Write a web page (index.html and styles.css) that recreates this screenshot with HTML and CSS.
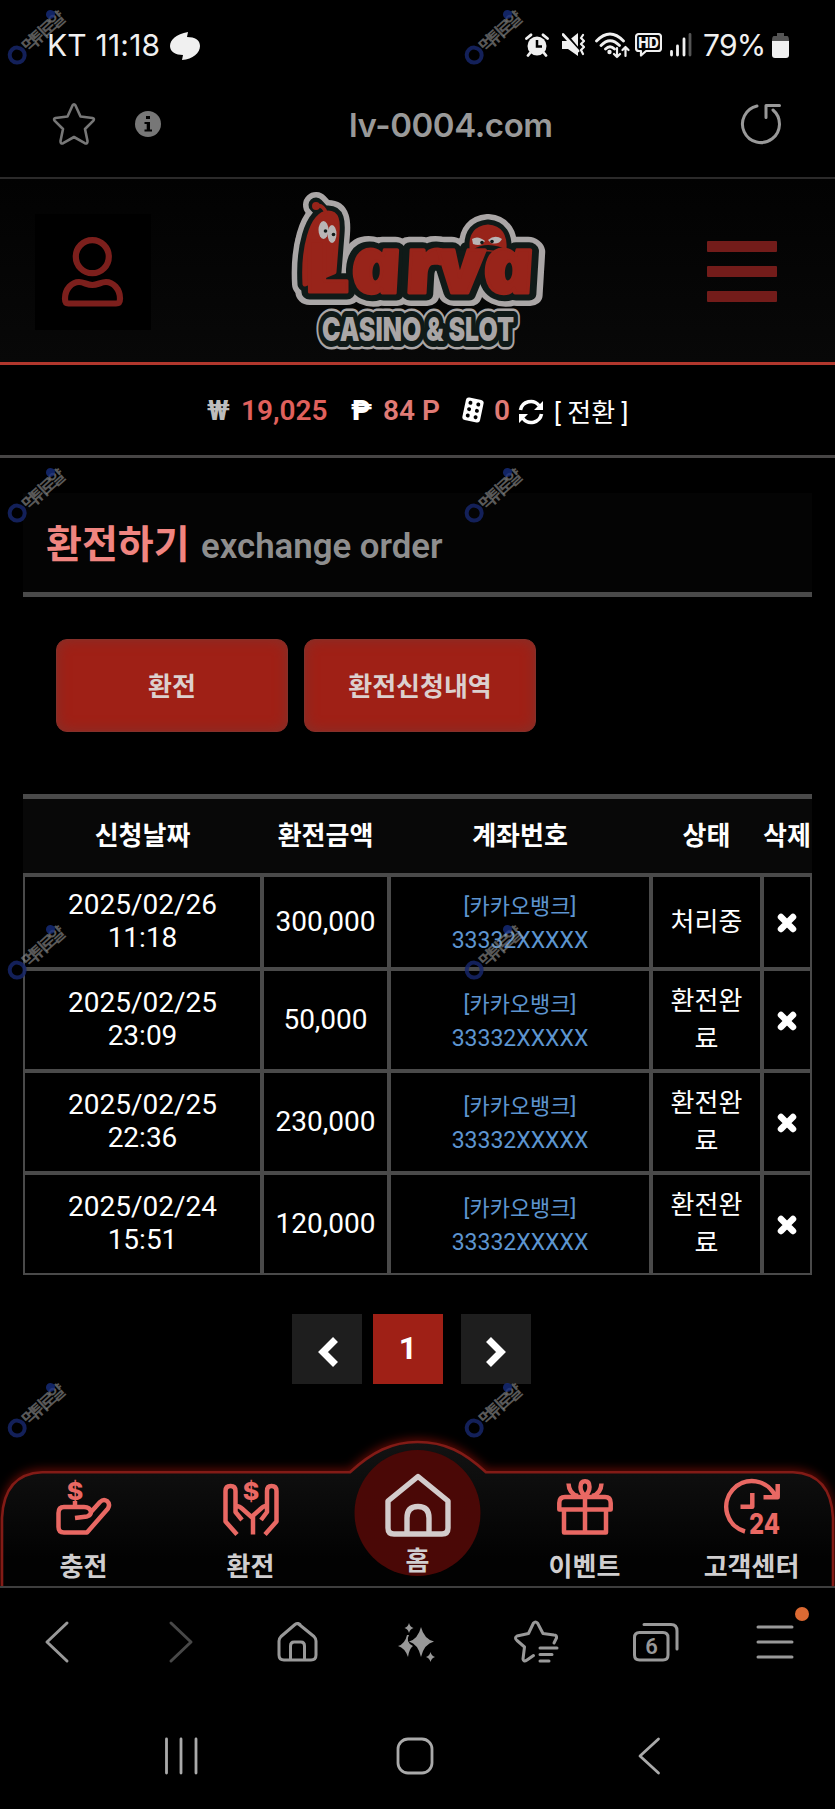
FILE: index.html
```html
<!DOCTYPE html>
<html lang="ko">
<head>
    <meta charset="UTF-8">
    <meta name="viewport" content="width=device-width, initial-scale=1.0">
    <title>환전하기 - Larva Casino &amp; Slot</title>
    <link rel="stylesheet" href="styles.css">
</head>
<body>

    <!-- Status Bar -->
    <div class="status-bar">
        <span class="carrier">KT 11:18</span>
        <svg class="talk" width="30" height="28" viewBox="0 0 30 28"><path d="M18 0 C6 2 0 8 0 14 C0 20 6 23 13 23 L12 28 C23 27 30 21 30 14 C30 8 25 5 17 5 Z"/></svg>
        <span class="status-icons">
            <svg class="alarm" width="24" height="24" viewBox="0 0 24 24"><circle cx="12" cy="13" r="9.5"/><path class="line" d="M1.5 5.5 L6 1.8 M22.5 5.5 L18 1.8 M5 20 L3 22.5 M19 20 L21 22.5"/><path class="cut" d="M12 7 V13.5 H17"/></svg>
            <svg class="mute" width="23" height="24" viewBox="0 0 23 24"><path d="M0 8 H6 L16 0 V23 L6 16 H0 Z"/><path class="cut" d="M3 0 L18 18"/><path class="line" d="M1 1.5 L16 18"/><path class="line thin" d="M21 2 L19 5 L22 8 L19 11 L22 14 L19 17 L21 21"/></svg>
            <svg class="wifi" width="35" height="27" viewBox="0 0 35 27"><path class="line" d="M1.5 9 Q15 -5 28.5 9 M6 13.5 Q15 4 24.5 13.5 M10.5 17 Q15 12.5 19.5 17"/><circle cx="14.5" cy="20" r="2.2"/><path class="line thin" d="M22 16 V25 M19 22 L22 25 L25 22 M30.5 24 V15 M27.5 18 L30.5 15 L33.5 18"/></svg>
            <svg class="volte" width="27" height="24" viewBox="0 0 27 24"><path class="line thin" d="M4 1 H23 Q26 1 26 4 V15 Q26 18 23 18 H11 L6 22.5 V18 H4 Q1 18 1 15 V4 Q1 1 4 1 Z"/><text x="13.5" y="14.5" class="hd">HD</text></svg>
            <svg width="22" height="24" viewBox="0 0 22 24"><path class="line" d="M1.5 18.5 V22 M7.5 13 V22 M14 6 V22"/><path class="line off" d="M20 1.5 V22"/></svg>
        </span>
        <span class="percent">79%</span>
        <svg width="17" height="25" viewBox="0 0 17 25"><path class="cap" d="M5 0 H12 V3 H15 Q17 3 17 8 H0 Q0 3 2 3 H5 Z"/><path d="M0 8 H17 V22 Q17 25 14 25 H3 Q0 25 0 22 Z"/></svg>
    </div>

    <!-- Address Bar -->
    <div class="address-bar">
        <svg class="star" width="44" height="44" viewBox="0 0 44 44"><path d="M20.5 3.5 Q22 1 23.5 3.5 L28.5 14.5 L40.5 16 Q43 16.8 41.2 18.8 L33 27 L35.5 39 Q35.6 42.3 32.8 41.2 L22 35 L11.2 41.2 Q8.4 42.3 8.5 39 L11 27 L2.8 18.8 Q1 16.8 3.5 16 L15.5 14.5 Z"/></svg>
        <span class="info"><svg width="26" height="26" viewBox="0 0 26 26"><circle cx="13" cy="13" r="13"/><path d="M11 5 H15 V8 H11 Z M9.5 11 H15 V18.5 H17 V20.5 H9.5 V18.5 H11.7 V13 H9.5 Z"/></svg></span>
        <span class="url">lv-0004.com</span>
        <svg class="reload" width="42" height="42" viewBox="0 0 42 42"><path d="M17 3 A18.5 18.5 0 1 0 33 7 M39.5 2.5 H26 V14.5"/></svg>
    </div>

    <!-- Site Header -->
    <header class="header">
        <div class="user-box">
            <svg width="116" height="116" viewBox="0 0 116 116"><circle cx="57.3" cy="42.7" r="16.5"/><path d="M33.5 89.5 C31 89.5 30 88 30 84.5 C30 75 37 68 44 68 C49 68 52 71 57.3 71 C62.5 71 66 68 71 68 C78 68 85 75 85 84.5 C85 88 84 89.5 81 89.5 Z"/></svg>
        </div>
        <svg class="logo" width="290" height="180" viewBox="0 0 290 180">
            <defs>
                <g id="word">
                    <text x="36" y="112" font-size="70" textLength="43" lengthAdjust="spacingAndGlyphs">L</text>
                    <g class="round" transform="skewX(10)">
                        <text x="64" y="113" font-size="78" textLength="52" lengthAdjust="spacingAndGlyphs">a</text>
                        <text x="118" y="113" font-size="78" textLength="37" lengthAdjust="spacingAndGlyphs">r</text>
                        <text x="152" y="113" font-size="78" textLength="46" lengthAdjust="spacingAndGlyphs">v</text>
                        <text x="196" y="113" font-size="78" textLength="53" lengthAdjust="spacingAndGlyphs">a</text>
                    </g>
                </g>
                <g id="heads">
                    <path d="M35 104 C33 70 41 34 58 33 C67 33 68 41 67 54 L64 92 Z"/>
                    <path d="M202 68 C201 53 208 48 218 47 C230 48 235 56 234 70 Z"/>
                </g>
                <text id="sub" x="52" y="161" font-size="33" textLength="192" lengthAdjust="spacingAndGlyphs">CASINO &amp; SLOT</text>
            </defs>
            <g class="rim"><use href="#word"/><use href="#heads"/><path d="M46 25 L58 38"/></g>
            <use class="sub-rim" href="#sub"/>
            <g class="edge"><use href="#word"/><use href="#heads"/><path d="M46 25 L58 38"/></g>
            <use class="sub-edge" href="#sub"/>
            <use class="face" href="#heads"/>
            <!-- dark gap between the small head and the letters -->
            <path class="gap" d="M174 72 Q190 74 204 72 Q218 62 240 74"/>
            <g class="face slim"><use href="#word"/><circle cx="46" cy="26" r="2.5"/></g>
            <path class="feeler" d="M46 26 Q53 24 56 33"/>
            <use class="sub-face" href="#sub"/>
            <g class="eyes"><ellipse cx="53.5" cy="50" rx="5" ry="9"/><ellipse cx="62" cy="54" rx="4.5" ry="9"/><path d="M202 59 Q208 55 215 61 Q211 67 203 64 Z M218 60 Q225 54 232 59 Q229 65 221 63 Z"/></g>
            <g class="pupils"><circle cx="55.5" cy="51" r="1.8"/><circle cx="63.5" cy="54.5" r="1.8"/><circle cx="212" cy="62.5" r="1.8"/><circle cx="222" cy="61.5" r="1.8"/></g>
        </svg>
        <div class="menu"><i></i><i></i><i></i></div>
    </header>

    <!-- Wallet -->
    <div class="wallet">
        <span class="won">₩</span>
        <b class="money">19,025</b>
        <span class="peso">₱</span>
        <b class="point">84 P</b>
        <svg class="dice" width="26" height="26" viewBox="0 0 26 26"><g transform="rotate(12 13 13)"><rect x="4" y="1.5" width="18" height="23" rx="3"/><g class="dots"><circle cx="9" cy="6.5" r="2"/><circle cx="17" cy="6.5" r="2"/><circle cx="9" cy="13" r="2"/><circle cx="17" cy="13" r="2"/><circle cx="9" cy="19.5" r="2"/><circle cx="17" cy="19.5" r="2"/></g></g></svg>
        <b class="point">0</b>
        <svg class="swap" width="26" height="26" viewBox="0 0 26 26"><path class="arc" d="M2.5 11 A10.5 10.5 0 0 1 21 6.5 M23.5 15 A10.5 10.5 0 0 1 5 19.5"/><path d="M25 2 V11 H16 Z M1 24 V15 H10 Z"/></svg>
        <span class="convert">[ 전환 ]</span>
    </div>

    <!-- Exchange Section -->
    <main class="content">
        <div class="title">
            <h1>환전하기</h1>
            <span>exchange order</span>
        </div>

        <div class="tabs">
            <button>환전</button>
            <button>환전신청내역</button>
        </div>

        <table class="list">
            <colgroup>
                <col class="c-date"><col class="c-amount"><col class="c-account"><col class="c-state"><col class="c-del">
            </colgroup>
            <tr><th>신청날짜</th><th>환전금액</th><th>계좌번호</th><th>상태</th><th>삭제</th></tr>
            <tr class="first">
                <td>2025/02/26<br>11:18</td>
                <td>300,000</td>
                <td class="account"><small>[카카오뱅크]</small><br>33332XXXXX</td>
                <td class="state">처리중</td>
                <td><svg class="x" width="20" height="20" viewBox="0 0 20 20"><path d="M4 4 L16 16 M16 4 L4 16"/></svg></td>
            </tr>
            <tr>
                <td>2025/02/25<br>23:09</td>
                <td>50,000</td>
                <td class="account"><small>[카카오뱅크]</small><br>33332XXXXX</td>
                <td class="state">환전완<br>료</td>
                <td><svg class="x" width="20" height="20" viewBox="0 0 20 20"><path d="M4 4 L16 16 M16 4 L4 16"/></svg></td>
            </tr>
            <tr>
                <td>2025/02/25<br>22:36</td>
                <td>230,000</td>
                <td class="account"><small>[카카오뱅크]</small><br>33332XXXXX</td>
                <td class="state">환전완<br>료</td>
                <td><svg class="x" width="20" height="20" viewBox="0 0 20 20"><path d="M4 4 L16 16 M16 4 L4 16"/></svg></td>
            </tr>
            <tr>
                <td>2025/02/24<br>15:51</td>
                <td>120,000</td>
                <td class="account"><small>[카카오뱅크]</small><br>33332XXXXX</td>
                <td class="state">환전완<br>료</td>
                <td><svg class="x" width="20" height="20" viewBox="0 0 20 20"><path d="M4 4 L16 16 M16 4 L4 16"/></svg></td>
            </tr>
        </table>

        <div class="paging">
            <a class="prev"><svg width="20" height="30" viewBox="0 0 20 30"><path d="M17.5 2.5 L5 15 L17.5 27.5"/></svg></a>
            <a class="on">1</a>
            <a class="next"><svg width="20" height="30" viewBox="0 0 20 30"><path d="M2.5 2.5 L15 15 L2.5 27.5"/></svg></a>
        </div>
    </main>

    <!-- Bottom Menu -->
    <nav class="bottom">
        <svg class="bottom-bg" width="835" height="156" viewBox="0 0 835 156">
            <defs>
                <linearGradient id="navFill" x1="0" y1="0" x2="0" y2="1">
                    <stop offset="0" stop-color="#131313"/>
                    <stop offset="0.8" stop-color="#020202"/>
                </linearGradient>
            </defs>
            <path class="shape" d="M2 158 V88 Q4 44 42 42.3 H350 C372 22 392 12 417.5 12 C445 12 464 22 486 42.3 H793 Q831 44 833 88 V158"/>
            <circle cx="417.5" cy="83" r="63"/>
        </svg>
        <div class="items">
            <a>
                <svg width="56" height="56" viewBox="0 0 56 56"><path d="M19 39 L31 37.5 Q35 36 35 33 Q34 28 28 28 H8 Q2.5 28 2.5 34 V48 Q2.5 53.5 8 53.5 H31 L52 29.5 Q54.5 25 51 22 Q47.5 19.5 44 23 L35 33 M19 22 V28"/><text x="19" y="20.5">$</text></svg>
                <span>충전</span>
            </a>
            <a>
                <svg width="56" height="56" viewBox="0 0 56 56"><path d="M14 55.5 L2.5 42.5 V12 Q2.5 7 7.5 7 Q12.5 7 12.5 12 V33 L19 41 M12.5 27 Q17 27 19.5 30 L28.5 38 L37.5 30 Q40 27 43.5 27 M30 55.5 V37 M42 55.5 L53.5 42.5 V12 Q53.5 7 48.5 7 Q44 7 44 12 V33 L38 41"/><text x="28" y="21">$</text></svg>
                <span>환전</span>
            </a>
            <a class="home">
                <svg width="66" height="64" viewBox="0 0 66 64"><path d="M33 3.5 L3 28 V55 Q3 61 9 61 H57 Q63 61 63 55 V28 Z M22 61 V45 Q22 33.5 33 33.5 Q44 33.5 44 45 V61"/></svg>
                <span>홈</span>
            </a>
            <a>
                <svg width="56" height="56" viewBox="0 0 56 56"><path d="M2.3 30.5 V24 Q2.3 18 8 18 H48 Q53.7 18 53.7 24 V30.5 Z M7 30.5 V53.5 H49 V30.5 M28 18 V53.5 M28 17 Q23.5 13 23.5 8 Q23.5 2.3 28 2.3 Q32.5 2.3 32.5 8 Q32.5 13 28 17 M11.5 4.5 Q12 15 21 17 M44.5 4.5 Q44 15 35 17"/></svg>
                <span>이벤트</span>
            </a>
            <a>
                <svg width="56" height="56" viewBox="0 0 56 56"><path d="M21 52.5 A25.7 25.7 0 1 1 51.5 17.5 M53.7 5 V18.3 H39.5 M28.3 14 V27.8 H16.5"/><text class="n24" x="40.5" y="55" textLength="31" lengthAdjust="spacingAndGlyphs">24</text></svg>
                <span>고객센터</span>
            </a>
        </div>
    </nav>

    <!-- Browser Toolbar -->
    <div class="toolbar">
        <svg width="48" height="48" viewBox="0 0 48 48"><path d="M31 5 L11 24 L31 43"/></svg>
        <svg class="dim" width="48" height="48" viewBox="0 0 48 48"><path d="M16 5 L36 24 L16 43"/></svg>
        <svg width="48" height="48" viewBox="0 0 48 48"><path d="M24 5.5 L40 18.5 Q42 20.5 42 23 V37 Q42 42 37 42 H10 Q5 42 5 37 V23 Q5 20.5 7 18.5 L21 6.5 Q23.5 4.5 26 6.5 M16.5 42 V28 Q16.5 24 20 24 H27 Q30.5 24 30.5 28 V42"/></svg>
        <svg class="solid" width="48" height="48" viewBox="0 0 48 48"><path d="M28 9 Q31 21 41 23.5 Q31 26 28 39 Q25 26 16 23.5 Q25 21 28 9 Z M14 17 L16 17 Q12 24 20 28 Q16 31 15 39 Q12 30 5 28 Q12 26 14 17 Z M16 5 Q17 9 20.5 10 Q17 11 16 15 Q15 11 11.5 10 Q15 9 16 5 Z M37.5 34 Q38.5 38 42 39 Q38.5 40 37.5 44 Q36.5 40 33 39 Q36.5 38 37.5 34 Z"/></svg>
        <svg width="48" height="48" viewBox="0 0 48 48"><path d="M41 25 L43.5 20 Q44 17 41 17 L30 15.5 L24.5 5 Q22.5 3 20.5 5 L15.5 15.5 L4 18 Q1 19.5 4 22.5 L11.5 29 L10 41 Q10.5 44.5 14 42 L20.5 37.5 M27 30 H44 M27 36.5 H39 M27 43 H36"/></svg>
        <svg width="48" height="48" viewBox="0 0 48 48"><path d="M7.5 14.5 H31 Q36 14.5 36 19.5 V37 Q36 42 31 42 H7.5 Q2.5 42 2.5 37 V19.5 Q2.5 14.5 7.5 14.5 M12 6.5 H39 Q45 6.5 45 13 V31"/><text x="19.5" y="36">6</text></svg>
        <span class="more">
            <svg width="48" height="48" viewBox="0 0 48 48"><path d="M7 9 H41 M7 24 H41 M7 39 H41"/></svg>
            <i class="dot"></i>
        </span>
    </div>

    <!-- Android Navigation -->
    <div class="android">
        <svg width="40" height="40" viewBox="0 0 40 40"><path d="M4.5 3 V37 M19 3 V37 M34 3 V37"/></svg>
        <svg width="40" height="40" viewBox="0 0 40 40"><rect x="2" y="3" width="34" height="34" rx="10"/></svg>
        <svg width="40" height="40" viewBox="0 0 40 40"><path d="M28.5 3 L10 20 L28.5 37"/></svg>
    </div>

    <!-- Watermarks -->
    <div class="marks">
        <span class="mark"><i></i>먹튀로얄</span><span class="mark"><i></i>먹튀로얄</span>
        <span class="mark"><i></i>먹튀로얄</span><span class="mark"><i></i>먹튀로얄</span>
        <span class="mark"><i></i>먹튀로얄</span><span class="mark"><i></i>먹튀로얄</span>
        <span class="mark"><i></i>먹튀로얄</span><span class="mark"><i></i>먹튀로얄</span>
    </div>

</body>
</html>
```

FILE: styles.css
```css
* {
    margin: 0;
    padding: 0;
    box-sizing: border-box;
}
body {
    position: relative;
    width: 835px;
    height: 1809px;
    overflow: hidden;
    background: #000;
    color: #fff;
    font-family: Roboto, "Noto Sans CJK KR", sans-serif;
}
svg { display: block; flex: none; }

/* status bar */
.status-bar {
    display: flex;
    align-items: center;
    height: 90px;
    padding: 0 46px 0 47px;
    font-family: Inter, sans-serif;
    font-size: 30px;
    color: #f0f0f0;
}
.status-bar svg { fill: #f0f0f0; }
.carrier {
    width: 123px;
    letter-spacing: 0.2px;
    white-space: nowrap;
}
.talk { margin-top: 2px; }
.status-icons {
    display: flex;
    align-items: center;
    margin-left: auto;
}
.alarm { margin-right: 13px; }
.mute { margin-right: 10px; }
.wifi { margin-right: 5px; }
.volte { margin-right: 8px; }
.line {
    fill: none;
    stroke: #f0f0f0;
    stroke-width: 2.8;
    stroke-linecap: round;
    stroke-linejoin: round;
}
.line.thin { stroke-width: 2.2; }
.line.off { stroke: #555; }
.cut { fill: none; stroke: #000; stroke-width: 2.5; }
.status-bar .cap { fill: #555; }
.hd { font-size: 14px; font-weight: 800; text-anchor: middle; }
.percent {
    width: 68px;
    padding-left: 11px;
    white-space: nowrap;
    letter-spacing: -0.8px;
}
.percent + svg { margin-left: 12px; }

/* address bar */
.address-bar {
    display: grid;
    grid-template-columns: 44px 26px 1fr 42px;
    column-gap: 35px;
    align-items: center;
    height: 89px;
    padding: 0 53px 18px 52px;
    border-bottom: 2px solid #2b2a2a;
}
.star, .reload {
    fill: none;
    stroke: #777;
    stroke-width: 2.6;
    stroke-linejoin: round;
}
.star { margin-top: -2px; }
.reload { margin-top: -2px; stroke: #999; stroke-width: 3; stroke-linecap: round; }
.info { margin-top: -1px; padding-left: 4px; }
.info circle { fill: #777; }
.info path { fill: #000; }
.url {
    padding-left: 157px;
    font-family: Inter, sans-serif;
    font-size: 33px;
    letter-spacing: -0.4px;
    font-weight: 600;
    color: #999;
}

/* header */
.header {
    display: flex;
    align-items: center;
    height: 186px;
    padding: 0 58px 0 35px;
    background: linear-gradient(#020202, #080808);
    border-bottom: 3px solid #b1372d;
}
.user-box { margin-top: 3px; background: #000; }
.user-box svg { fill: none; stroke: #7c1f1c; stroke-width: 6.2; }
.logo {
    margin: -2px 0 0 119px;
    font-family: Inter, sans-serif;
    font-weight: 900;
}
.round { font-family: "Open Sans", "Noto Sans", sans-serif; font-style: italic; font-weight: 800; }
.rim { fill: #aaa6a6; stroke: #aaa6a6; stroke-width: 26; stroke-linejoin: round; stroke-linecap: round; }
.edge { fill: #101a18; stroke: #101a18; stroke-width: 15; stroke-linejoin: round; stroke-linecap: round; }
.face { fill: #98241a; stroke: #98241a; stroke-width: 5; stroke-linejoin: round; }
.face.slim { stroke-width: 3; }
.gap { fill: none; stroke: #101a18; stroke-width: 5; }
.feeler { fill: none; stroke: #98241a; stroke-width: 3.5; }
.sub-rim { stroke: #aaa6a6; stroke-width: 17; stroke-linejoin: round; }
.sub-edge { stroke: #101a18; stroke-width: 12; stroke-linejoin: round; }
.sub-face { fill: #aaa6a6; }
.eyes { fill: #b9b5b5; }
.pupils { fill: #101a18; }
.menu { display: flex; flex-direction: column; gap: 14px; width: 70px; margin: 2px 0 0 auto; }
.menu i { height: 11px; background: #731c1a; border-radius: 1px; }

/* wallet */
.wallet {
    display: flex;
    align-items: center;
    height: 93px;
    padding-left: 207px;
    border-bottom: 3px solid #474545;
    font-size: 28px;
    white-space: nowrap;
}
.wallet b { font-weight: 600; }
.won { width: 34px; font-weight: 700; color: #bdbdbd; }
.money { width: 110px; color: #e0615c; }
.peso { width: 32px; font-weight: 900; }
.point { color: #e07b76; }
.dice { margin: 0 8px 0 20px; fill: #fff; }
.dots { fill: #000; }
.swap { margin: 4px 10px 0 8px; fill: #fff; }
.arc { fill: none; stroke: #fff; stroke-width: 3.6; }
.convert { font-size: 26px; }

/* content */
.content { height: 972px; padding: 35px 23px 0; }
.title {
    display: flex;
    align-items: baseline;
    height: 104px;
    padding: 23px 22px 0 23px;
    background: #040404;
    border-bottom: 5px solid #4a4a4a;
}
.title h1 {
    width: 155px;
    font-size: 39px;
    line-height: 58px;
    font-weight: 700;
    color: #f08580;
    white-space: nowrap;
}
.title span { font-size: 34.8px; font-weight: 600; color: #8e8e8e; }
.tabs { display: flex; gap: 16px; padding: 42px 33px 62px; }
.tabs button {
    width: 232px;
    height: 93px;
    padding-bottom: 3px;
    border: 1px solid #85302a;
    border-radius: 11px;
    background: #9f2016;
    box-shadow: inset 0 0 13px #84302a;
    color: #dcd0ce;
    font: 700 26px "Noto Sans CJK KR", sans-serif;
}

/* list */
.list {
    width: 789px;
    table-layout: fixed;
    border-spacing: 0;
    text-align: center;
    font-size: 28px;
    line-height: 32.6px;
}
.c-date { width: 239px; }
.c-amount { width: 127px; }
.c-account { width: 262px; }
.c-state { width: 111px; }
.c-del { width: 50px; }
.list tr { height: 102px; }
.list tr:first-child { height: 81px; }
.list tr.first { height: 94px; }
.list th {
    background: #080808;
    border-top: 5px solid #4a4a4a;
    border-bottom: 2px solid #4a4a4a;
    font-size: 26px;
    white-space: nowrap;
}
.list td { border: 2px solid #4a4a4a; vertical-align: middle; }
.list .account { padding-top: 4px; font-size: 23px; line-height: 34px; color: #5d95d0; }
.list .account small { font-size: 22px; }
.list .state { font-size: 26px; line-height: 38px; }
.x { margin: 2px auto 0; stroke: #fff; stroke-width: 6.5; stroke-linecap: round; }

/* paging */
.paging { display: flex; padding: 39px 0 0 269px; }
.paging a {
    display: flex;
    justify-content: center;
    align-items: center;
    width: 70px;
    height: 70px;
    margin-right: 11px;
    background: #1e1e1e;
    font-size: 32px;
    font-weight: 700;
}
.paging .on { margin-right: 18px; padding: 0 0 2px 0; background: #9f2016; }
.paging svg { margin-top: 6px; overflow: visible; fill: none; stroke: #fff; stroke-width: 7; }
.paging .prev svg { margin-left: 2px; }

/* bottom menu */
.bottom {
    display: grid;
    height: 158px;
    border-bottom: 2px solid #3e3e3e;
}
.bottom-bg, .items { grid-area: 1 / 1; }
.shape {
    fill: url(#navFill);
    stroke: #821b16;
    stroke-width: 2.6;
    filter: drop-shadow(0 -2px 5px rgba(190, 20, 10, 0.5));
}
.bottom-bg circle { fill: #4a0806; }
.items { display: flex; z-index: 1; }
.items a {
    display: flex;
    flex-direction: column;
    align-items: center;
    width: 167px;
    padding-top: 49px;
    font: 700 26px/38px "Noto Sans CJK KR", sans-serif;
    color: #d0cecf;
}
.items span { margin-top: 11px; }
.items svg { overflow: visible; fill: none; stroke: #e96863; stroke-width: 4.5; stroke-linejoin: round; }
.items text {
    fill: #e96863;
    stroke: none;
    font: 800 25px Inter, sans-serif;
    text-anchor: middle;
}
.items .n24 { font-size: 28px; }
.items .home { padding-top: 43px; }
.items .home svg { stroke: #d3cccc; stroke-width: 5.4; }
.items .home span { margin-top: 3px; }

/* browser toolbar */
.toolbar {
    display: flex;
    justify-content: space-around;
    align-items: center;
    height: 108px;
}
.toolbar svg {
    fill: none;
    stroke: #999;
    stroke-width: 3;
    stroke-linecap: round;
    stroke-linejoin: round;
}
.toolbar .dim { stroke: #484848; }
.toolbar .solid { fill: #999; stroke: none; }
.toolbar text {
    fill: #999;
    stroke: none;
    font: 600 22px Roboto, sans-serif;
    text-anchor: middle;
}
.more { position: relative; }
.dot {
    position: absolute;
    top: -11px;
    right: -10px;
    width: 14px;
    height: 14px;
    border-radius: 50%;
    background: #dc6a33;
}

/* android navigation */
.android {
    display: flex;
    justify-content: space-between;
    align-items: center;
    height: 119px;
    padding: 0 165px 0 162px;
}
.android svg { fill: none; stroke: #aaa; stroke-width: 2.8; stroke-linecap: round; stroke-linejoin: round; }

/* watermarks over the page */
.marks {
    position: absolute;
    top: 0;
    left: 0;
    display: grid;
    grid-template-columns: 457px 300px;
    grid-auto-rows: 457.5px;
    pointer-events: none;
}
.mark {
    position: relative;
    display: flex;
    align-items: center;
    width: 84px;
    height: 24px;
    margin: 21px 0 0 -1px;
    transform: rotate(-42deg);
    font: 700 17px/24px "Noto Sans CJK KR", sans-serif;
    letter-spacing: -3.6px;
    color: rgba(150, 150, 150, 0.6);
    white-space: nowrap;
}
.mark i {
    width: 19px;
    height: 19px;
    border: 4px solid rgba(22, 38, 105, 0.85);
    border-radius: 50%;
}
.mark::after {
    content: "";
    position: absolute;
    left: 57px;
    top: 0;
    width: 9px;
    height: 9px;
    border-radius: 50%;
    background: rgba(22, 45, 125, 0.8);
}
```
